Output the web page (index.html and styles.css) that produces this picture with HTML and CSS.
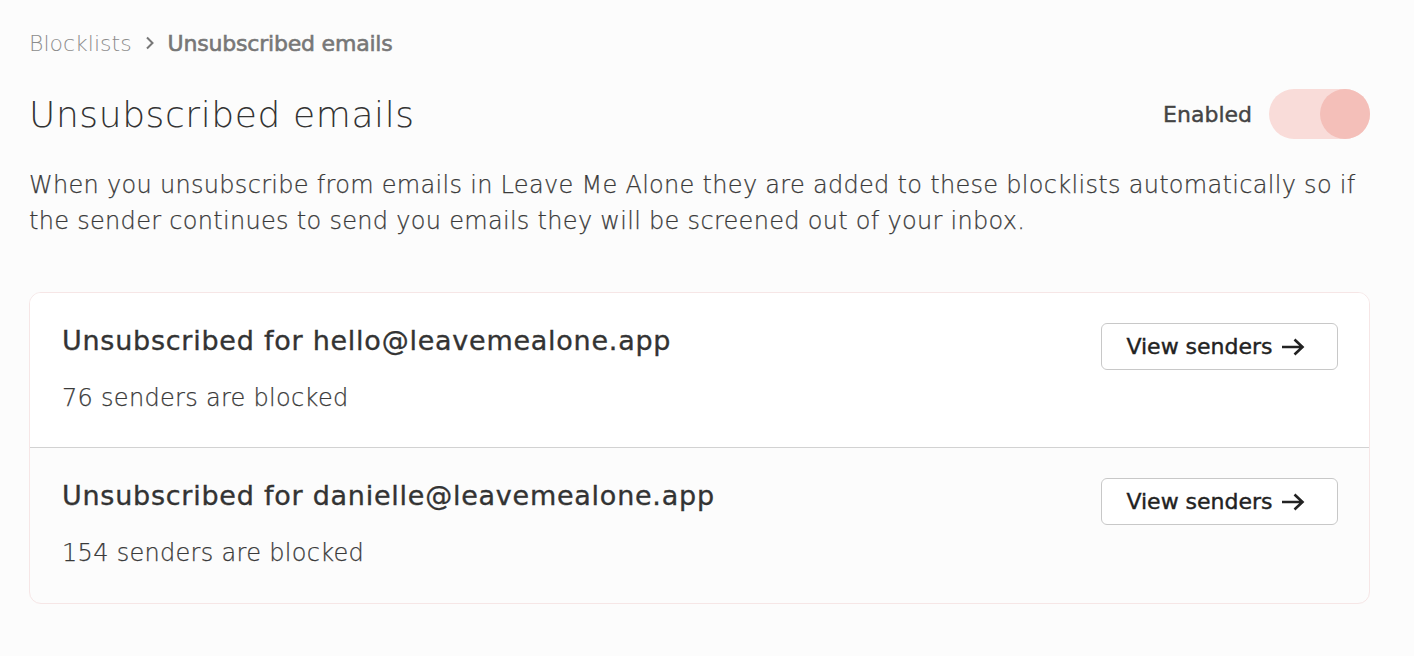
FILE: index.html
```html
<!DOCTYPE html>
<html lang="en">
<head>
<meta charset="utf-8">
<title>Unsubscribed emails</title>
<link rel="stylesheet" href="styles.css">
</head>
<body>
<main class="page">
  <nav class="crumbs">
    <span class="crumb">Blocklists</span>
    <svg class="chev" width="10" height="14" viewBox="0 0 10 14"><path d="M2 1.5 L7.5 7 L2 12.5" fill="none" stroke="#777" stroke-width="2"/></svg>
    <span class="crumb current">Unsubscribed emails</span>
  </nav>
  <header class="head">
    <h1 class="title">Unsubscribed emails</h1>
    <div class="toggle-wrap">
      <span class="toggle-label">Enabled</span>
      <span class="toggle"><span class="knob"></span></span>
    </div>
  </header>
  <p class="desc">When you unsubscribe from emails in Leave Me Alone they are added to these blocklists automatically so if the sender continues to send you emails they will be screened out of your inbox.</p>
  <section class="card">
    <div class="row first">
      <div class="info">
        <h2 class="row-title">Unsubscribed for hello@leavemealone.app</h2>
        <p class="row-sub">76 senders are blocked</p>
      </div>
      <button class="btn">View senders <svg class="arrow" width="24" height="18" viewBox="0 0 24 18"><path d="M1 9 H21.5 M13.5 1.5 L21.5 9 L13.5 16.5" fill="none" stroke="#222" stroke-width="2.6"/></svg></button>
    </div>
    <div class="row">
      <div class="info">
        <h2 class="row-title">Unsubscribed for danielle@leavemealone.app</h2>
        <p class="row-sub">154 senders are blocked</p>
      </div>
      <button class="btn">View senders <svg class="arrow" width="24" height="18" viewBox="0 0 24 18"><path d="M1 9 H21.5 M13.5 1.5 L21.5 9 L13.5 16.5" fill="none" stroke="#222" stroke-width="2.6"/></svg></button>
    </div>
  </section>
</main>
</body>
</html>
```
FILE: styles.css
```css
* { box-sizing: border-box; }
html, body { margin: 0; background: #fcfcfc; }
body {
  font-family: "DejaVu Sans", sans-serif;
  color: #333;
}
.page {
  padding: 28px 44px 40px 29px;
}
.crumbs {
  display: flex;
  align-items: center;
  gap: 13px;
  font-size: 22px;
  height: 30px;
}
.crumb { color: #8c8c8c; font-weight: 200; }
.crumb.current {
  color: #777;
  font-weight: 400;
  letter-spacing: -0.2px;
  -webkit-text-stroke: 0.6px #777;
}
.head {
  display: flex;
  align-items: center;
  justify-content: space-between;
  margin-top: 30px;
  height: 52px;
}
.title {
  margin: 0;
  font-size: 36px;
  font-weight: 200;
  letter-spacing: 0.6px;
  color: #333;
}
.toggle-wrap {
  display: flex;
  align-items: center;
  gap: 17px;
}
.toggle-label {
  font-size: 22px;
  color: #444;
  -webkit-text-stroke: 0.4px #444;
}
.toggle {
  display: flex;
  justify-content: flex-end;
  width: 101px;
  height: 50px;
  border-radius: 25px;
  background: #f9dcd9;
}
.knob {
  width: 50px;
  height: 50px;
  border-radius: 50%;
  background: #f4bfb9;
}
.desc {
  margin: 27px 0 0;
  font-size: 24px;
  line-height: 36px;
  font-weight: 200;
  letter-spacing: 0.3px;
  color: #3a3a3a;
  -webkit-text-stroke: 0.25px #3a3a3a;
}
.card {
  margin-top: 53px;
  border: 1px solid #f6e6e6;
  border-radius: 12px;
  overflow: hidden;
}
.row {
  display: flex;
  justify-content: space-between;
  align-items: flex-start;
  padding: 30px 31px 0 32px;
  height: 155px;
}
.row.first {
  background: #fff;
  border-bottom: 1px solid #d2d2d2;
}
.row-title {
  margin: 0;
  font-size: 27px;
  line-height: 36px;
  font-weight: 400;
  letter-spacing: 0.75px;
  color: #333;
  -webkit-text-stroke: 0.35px #333;
}
.row-sub {
  margin: 23px 0 0;
  font-size: 24px;
  line-height: 32px;
  font-weight: 200;
  letter-spacing: 0.3px;
  color: #3a3a3a;
  -webkit-text-stroke: 0.25px #3a3a3a;
}
.btn {
  display: flex;
  align-items: center;
  gap: 8px;
  width: 237px;
  height: 47px;
  justify-content: center;
  background: #fff;
  border: 1px solid #c8c8c8;
  border-radius: 6px;
  font-family: inherit;
  font-size: 22px;
  color: #222;
  -webkit-text-stroke: 0.4px #222;
  padding: 0 8px 0 0;
}
.arrow { display: block; }
```
